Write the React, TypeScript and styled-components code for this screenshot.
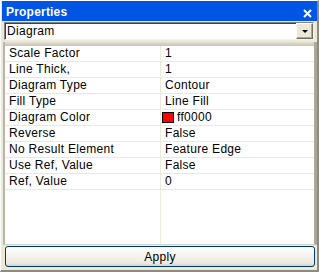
import React from 'react';
import styled, { createGlobalStyle } from 'styled-components';

const GlobalStyle = createGlobalStyle`
    html, body {
        margin: 0;
        padding: 0;
        background: #ece9d8;
    }
    * {
        box-sizing: border-box;
    }
`;

const Window = styled.div`
    width: 319px;
    height: 272px;
    display: flex;
    flex-direction: column;
    background: #ece9d8;
    border-top: 1px solid #fdfdfb;
    border-left: 1px solid #fdfdfb;
    border-right: 2px solid #8d8a7e;
    border-bottom: 2px solid #8d8a7e;
    padding: 0 0 3px 1px;
    font-family: 'Liberation Sans', Arial, sans-serif;
    font-size: 12px;
    letter-spacing: 0.3px;
    color: #000;
`;

const TitleBar = styled.div`
    height: 20px;
    flex: none;
    display: flex;
    align-items: center;
    justify-content: space-between;
    background: #0055e5;
    color: #fff;
    padding: 2px 5px 0 4px;
`;

const Title = styled.span`
    font-weight: bold;
    font-size: 12px;
    letter-spacing: 0.2px;
`;

const CloseButton = styled.span`
    display: flex;
    width: 9px;
    height: 9px;
    margin-top: 2px;
`;

const Body = styled.div`
    flex: 1;
    display: flex;
    flex-direction: column;
    padding-left: 1px;
    min-height: 0;
`;

const Combo = styled.div`
    height: 18px;
    margin: 1px 3px 0 1px;
    display: flex;
    align-items: center;
    background: #fff;
    border-top: 1px solid #848284;
    border-left: 1px solid #848284;
    border-right: 1px solid #f4f3ee;
    border-bottom: 1px solid #f4f3ee;
    box-shadow: inset 1px 1px 0 #404040;
    padding-left: 2px;
`;

const ComboText = styled.span`
    flex: 1;
    line-height: 15px;
`;

const DropButton = styled.span`
    width: 17px;
    height: 16px;
    display: flex;
    align-items: center;
    justify-content: center;
    background: #ece9d8;
    border-top: 1px solid #fdfdfb;
    border-left: 1px solid #fdfdfb;
    border-right: 1px solid #716f64;
    border-bottom: 1px solid #716f64;
    box-shadow: inset -1px -1px 0 #aca899;
`;

const Arrow = styled.span`
    width: 0;
    height: 0;
    border-left: 3px solid transparent;
    border-right: 3px solid transparent;
    border-top: 3px solid #000;
    margin-top: 1px;
`;

const Grid = styled.div`
    flex: 1;
    margin-top: 2px;
    display: flex;
    flex-direction: column;
    background: #fff;
    border-left: 2px solid #b9b6a9;
    border-right: 3px solid #aca899;
    border-bottom: 1px solid #d8d5c8;
    min-height: 0;
`;

const HeaderStrip = styled.div`
    height: 4px;
    flex: none;
    background: linear-gradient(#e4e1d5, #c7c3b3);
`;

const Row = styled.div<{ $fill?: boolean }>`
    display: flex;
    height: ${p => (p.$fill ? 'auto' : '16px')};
    flex: ${p => (p.$fill ? '1' : 'none')};
    border-bottom: ${p => (p.$fill ? 'none' : '1px solid #ece9d8')};
`;

const NameCell = styled.div`
    width: 156px;
    flex: none;
    padding-left: 4px;
    line-height: 15px;
    border-right: 1px solid #ece9d8;
    white-space: nowrap;
`;

const ValueCell = styled.div`
    flex: 1;
    display: flex;
    align-items: center;
    padding-left: 4px;
    line-height: 15px;
    white-space: nowrap;
`;

const Swatch = styled.span<{ $color: string }>`
    width: 12px;
    height: 11px;
    margin: 0 3px 0 -3px;
    background: ${p => p.$color};
    border: 1px solid #000;
`;

const ApplyButton = styled.button`
    height: 21px;
    margin: 1px 2px 0 2px;
    flex: none;
    border: 1px solid #003c74;
    border-radius: 3px;
    background: linear-gradient(#ffffff 0%, #f4f3ee 45%, #ece9df 85%, #d6d0c5 100%);
    font-family: 'Liberation Sans', Arial, sans-serif;
    font-size: 12px;
    letter-spacing: 0.3px;
    color: #000;
    padding: 0;
`;

const properties: { name: string; value: string; color?: string }[] = [
    { name: 'Scale Factor', value: '1' },
    { name: 'Line Thick,', value: '1' },
    { name: 'Diagram Type', value: 'Contour' },
    { name: 'Fill Type', value: 'Line Fill' },
    { name: 'Diagram Color', value: 'ff0000', color: '#ff0000' },
    { name: 'Reverse', value: 'False' },
    { name: 'No Result Element', value: 'Feature Edge' },
    { name: 'Use Ref, Value', value: 'False' },
    { name: 'Ref, Value', value: '0' },
];

const App: React.FC = () => {
    return (
        <>
            <GlobalStyle />
            <Window>
                <TitleBar>
                    <Title>Properties</Title>
                    <CloseButton>
                        <svg width="9" height="9" viewBox="0 0 9 9">
                            <path d="M1 1 L8 8 M8 1 L1 8" stroke="#fff" strokeWidth="2" />
                        </svg>
                    </CloseButton>
                </TitleBar>
                <Body>
                    <Combo>
                        <ComboText>Diagram</ComboText>
                        <DropButton>
                            <Arrow />
                        </DropButton>
                    </Combo>
                    <Grid>
                        <HeaderStrip />
                        {properties.map(p => (
                            <Row key={p.name}>
                                <NameCell>{p.name}</NameCell>
                                <ValueCell>
                                    {p.color && <Swatch $color={p.color} />}
                                    {p.value}
                                </ValueCell>
                            </Row>
                        ))}
                        <Row $fill>
                            <NameCell />
                            <ValueCell />
                        </Row>
                    </Grid>
                    <ApplyButton>Apply</ApplyButton>
                </Body>
            </Window>
        </>
    );
};

export default App;
